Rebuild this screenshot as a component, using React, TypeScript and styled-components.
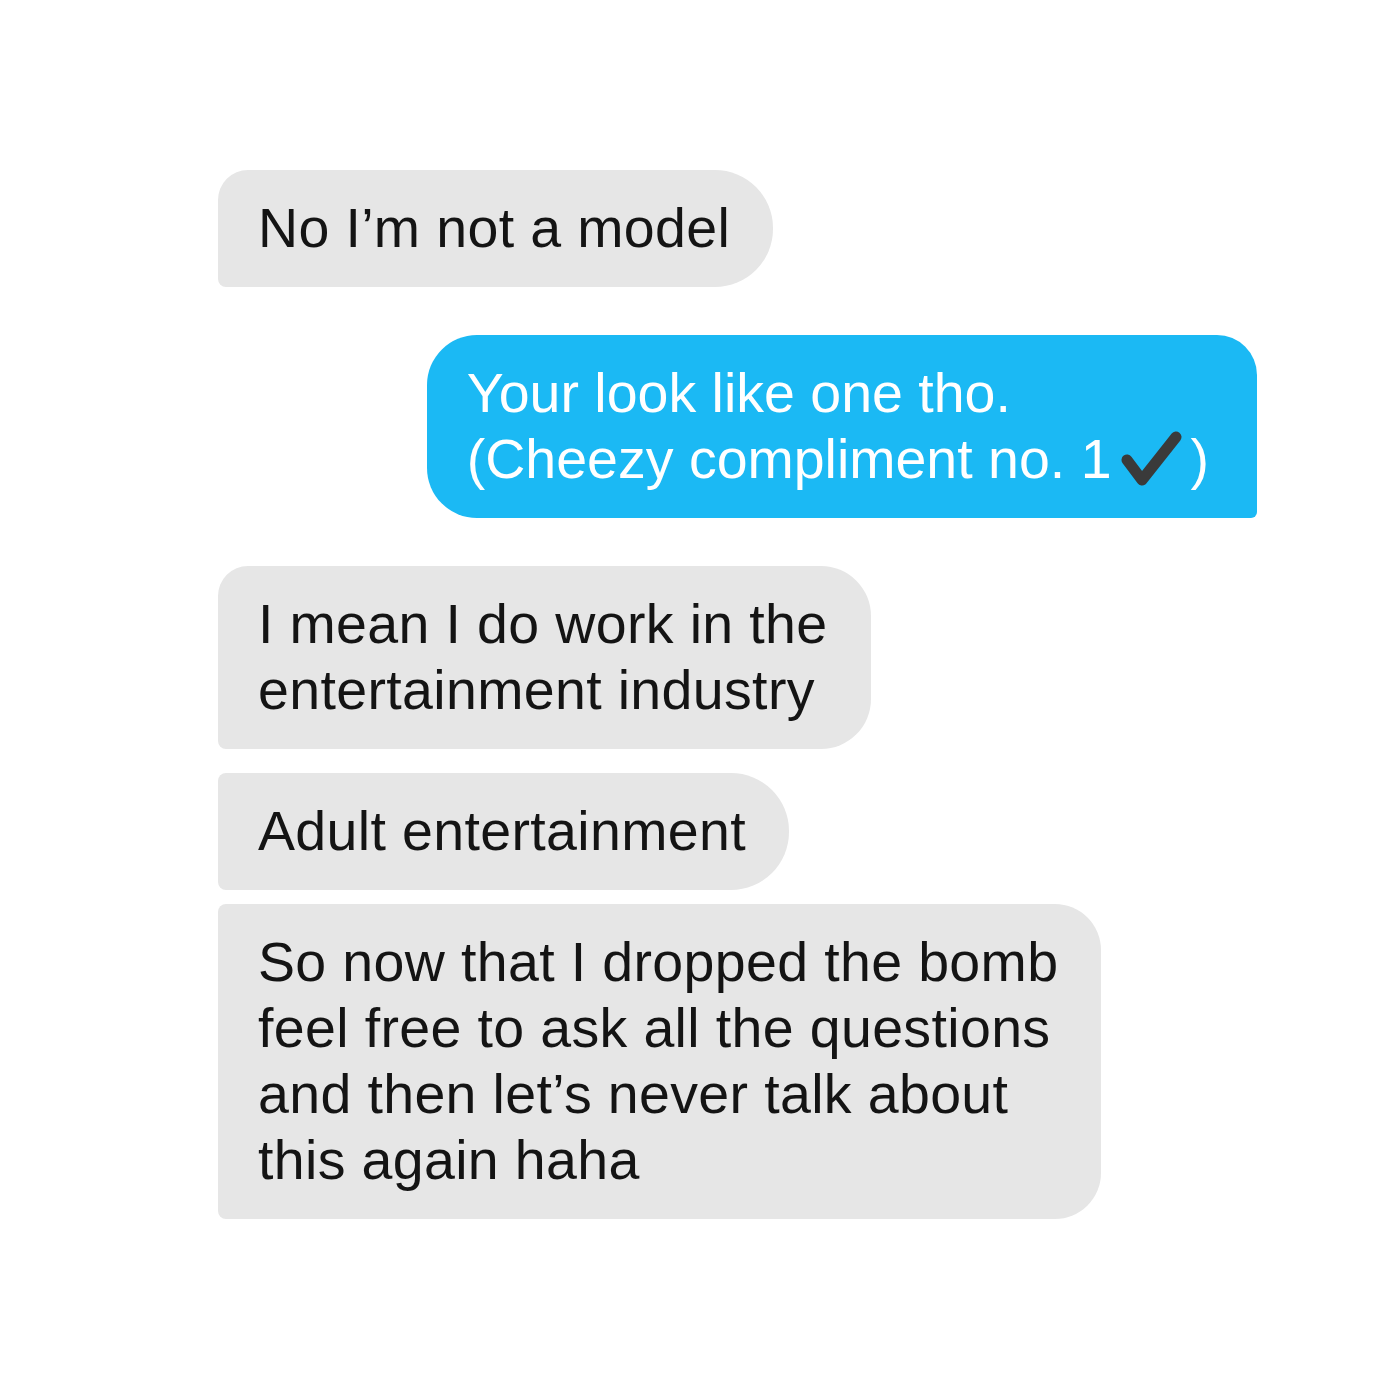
import React from "react";
import styled, { createGlobalStyle, css } from "styled-components";

const GlobalStyle = createGlobalStyle`
  html, body {
    margin: 0;
    padding: 0;
    background: #ffffff;
  }
  body {
    font-family: "Liberation Sans", Arial, sans-serif;
  }
`;

const Page = styled.div`
  width: 1400px;
  height: 1400px;
  box-sizing: border-box;
  padding: 170px 143px 0 218px;
  display: flex;
  flex-direction: column;
  background: #ffffff;
`;

type Side = "in" | "out";

const Bubble = styled.div<{
  $side: Side;
  $gap: number;
  $tl: number;
  $tr: number;
  $br: number;
  $bl: number;
}>`
  box-sizing: border-box;
  width: fit-content;
  margin-top: ${(p) => p.$gap}px;
  padding: 25px 43px 26px 40px;
  font-family: "Liberation Sans", Arial, sans-serif;
  font-size: 55.5px;
  line-height: 66px;
  letter-spacing: 0.35px;
  white-space: nowrap;
  border-radius: ${(p) => `${p.$tl}px ${p.$tr}px ${p.$br}px ${p.$bl}px`};
  ${(p) =>
    p.$side === "in"
      ? css`
          align-self: flex-start;
          background: #e6e6e6;
          color: #141414;
        `
      : css`
          align-self: flex-end;
          background: #1bb9f4;
          color: #ffffff;
          letter-spacing: 0px;
          padding-right: 48px;
        `}
`;

const Line = styled.div`
  display: flex;
  align-items: center;
`;

const Check = styled.svg`
  width: 62px;
  height: 58px;
  margin: 0 9px 0 8px;
  flex: none;
`;

const CheckMark = () => (
  <Check viewBox="0 0 62 58" aria-hidden="true">
    <path
      d="M7 30 L22 50 L56 7"
      fill="none"
      stroke="#3a3a3a"
      strokeWidth={11}
      strokeLinecap="round"
      strokeLinejoin="round"
    />
  </Check>
);

export default function App() {
  return (
    <>
      <GlobalStyle />
      <Page>
        <Bubble $side="in" $gap={0} $tl={30} $tr={58} $br={58} $bl={8}>
          No I’m not a model
        </Bubble>
        <Bubble $side="out" $gap={48} $tl={50} $tr={40} $br={6} $bl={50}>
          <Line>Your look like one tho.</Line>
          <Line>
            (Cheezy compliment no. 1<CheckMark />)
          </Line>
        </Bubble>
        <Bubble $side="in" $gap={48} $tl={30} $tr={50} $br={50} $bl={8}>
          <Line>I mean I do work in the</Line>
          <Line>entertainment industry</Line>
        </Bubble>
        <Bubble $side="in" $gap={24} $tl={8} $tr={58} $br={58} $bl={8}>
          Adult entertainment
        </Bubble>
        <Bubble $side="in" $gap={14} $tl={8} $tr={46} $br={46} $bl={8}>
          <Line>So now that I dropped the bomb</Line>
          <Line>feel free to ask all the questions</Line>
          <Line>and then let’s never talk about</Line>
          <Line>this again haha</Line>
        </Bubble>
      </Page>
    </>
  );
}
